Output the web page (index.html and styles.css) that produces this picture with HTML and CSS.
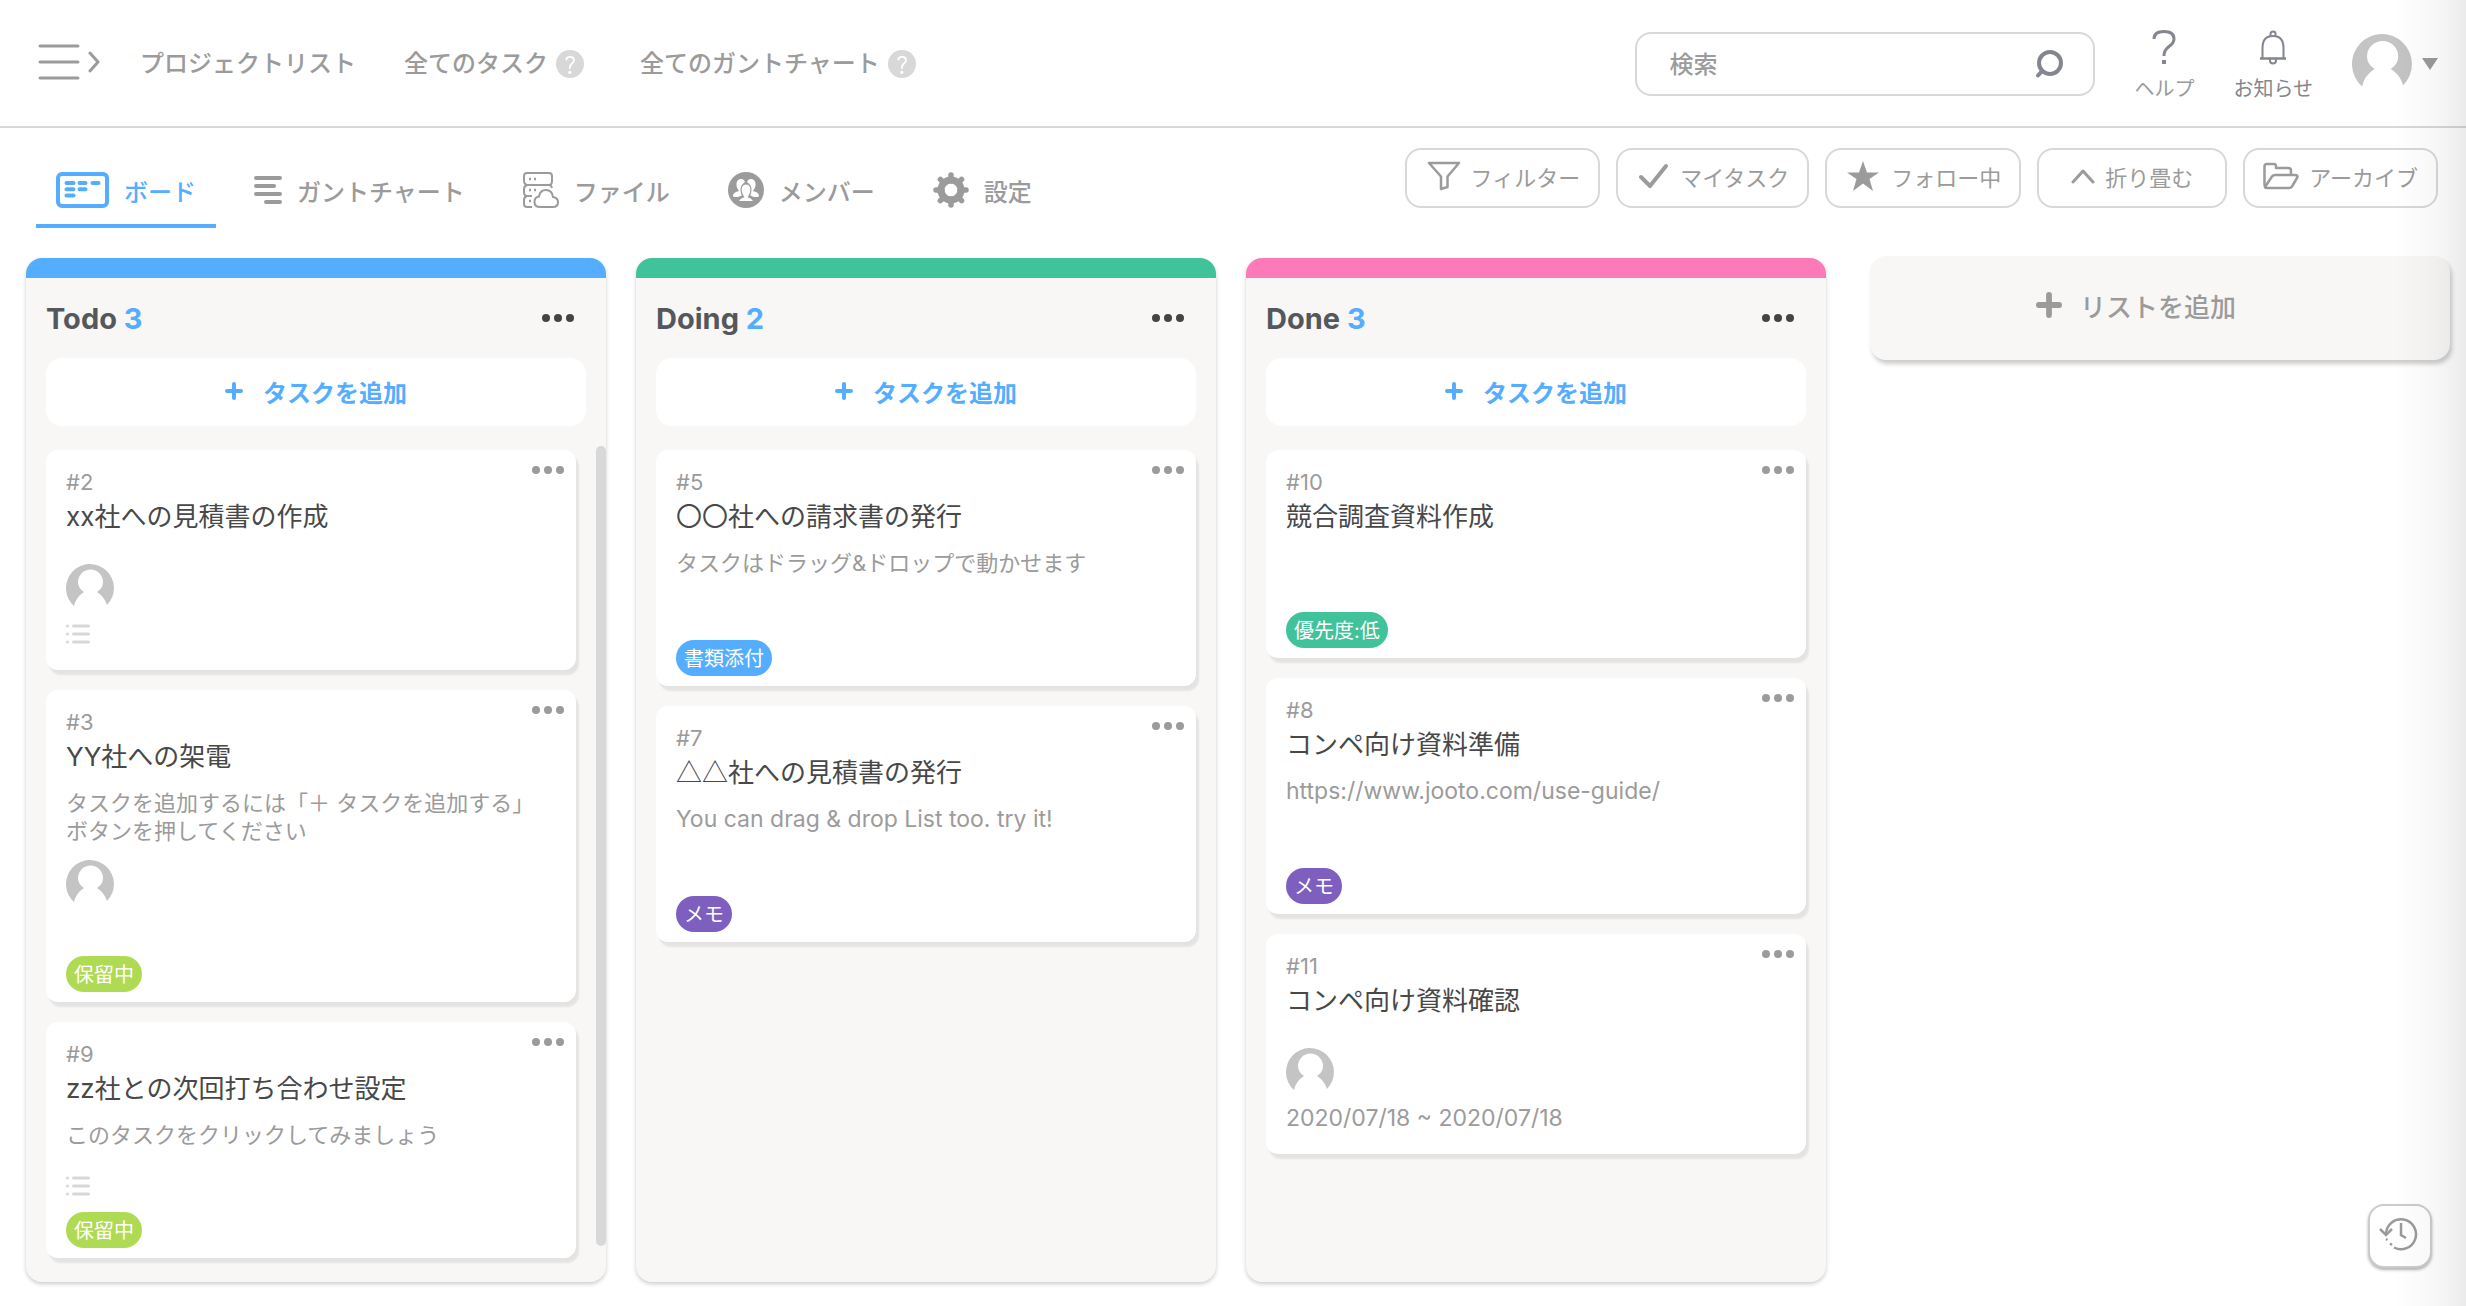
FILE: index.html
```html
<!DOCTYPE html>
<html lang="ja">
<head>
<meta charset="utf-8">
<meta name="viewport" content="width=device-width, initial-scale=1">
<title>ボード</title>
<link rel="stylesheet" href="styles.css">
</head>
<body>
<svg class="sprite" aria-hidden="true">
  <symbol id="dots" viewBox="0 0 32 8"><circle cx="4" cy="4" r="4"/><circle cx="16" cy="4" r="4"/><circle cx="28" cy="4" r="4"/></symbol>
  <symbol id="avatar" viewBox="0 0 48 48"><path d="M8 42A24 24 0 1 1 41 41Q38 32 31 28Q37 24 37 18A12.500 12.500 0 1 0 12 18Q12 24 18 28Q10 33 8 42Z" fill="#c4c4c4"/></symbol>
  <symbol id="checklist" viewBox="0 0 24 20"><path d="M7.500 2h15M7.500 10h15M7.500 18h15M1.500 2h.01M1.500 10h.01M1.500 18h.01" fill="none" stroke="#d8d8d8" stroke-width="3" stroke-linecap="round"/></symbol>
  <symbol id="plus" viewBox="0 0 18 18"><path d="M9 2v14M2 9h14" fill="none" stroke="currentColor" stroke-width="4" stroke-linecap="round"/></symbol>
  <symbol id="question" viewBox="0 0 28 28"><circle cx="14" cy="14" r="14" fill="#d8d8d8"/><path d="M10.300 9.500Q10.800 6.800 14 6.800Q18 6.800 18 10.200Q18 12 16 13.500Q13.800 15.200 13.800 18" fill="none" stroke="#fff" stroke-width="1.800" stroke-linecap="round"/><circle cx="13.800" cy="22.300" r="1.600" fill="#fff"/></symbol>
</svg>

<header class="header">
  <button class="menu" aria-label="メニュー"><svg width="62" height="36" viewBox="0 0 62 36" fill="none" stroke="currentColor" stroke-width="3" stroke-linecap="round" stroke-linejoin="round"><path d="M2 2h38M2 18h38M2 34h38M52 9l8 9-8 9"/></svg></button>
  <nav class="nav">
    <a class="nav-link" href="#">プロジェクトリスト</a>
    <a class="nav-link" href="#">全てのタスク<svg class="hint" width="28" height="28"><use href="#question"/></svg></a>
    <a class="nav-link" href="#">全てのガントチャート<svg class="hint" width="28" height="28"><use href="#question"/></svg></a>
  </nav>
  <form class="search" role="search">
    <input class="search-input" type="text" placeholder="検索" aria-label="検索">
    <button class="search-button" type="button" aria-label="検索する"><svg width="28" height="28" viewBox="0 0 28 28" fill="none" stroke="currentColor" stroke-width="4" stroke-linecap="round"><circle cx="15" cy="13" r="11"/><path d="M7 21l-4 4.500"/></svg></button>
  </form>
  <a class="header-item" href="#"><svg width="36" height="36" viewBox="0 0 36 36" fill="none" stroke="#84868f" stroke-width="3"><path d="M8 10Q8 2.500 18 2.500Q28 2.500 28 10Q28 14 23 17.500Q18 21 18 27"/><path d="M18 31v4" stroke-width="4"/></svg>ヘルプ</a>
  <a class="header-item header-item--dark" href="#"><svg width="36" height="36" viewBox="0 0 36 36" fill="none" stroke="currentColor" stroke-width="2"><path d="M7.500 29V19Q7.500 7 18 7Q28.500 7 28.500 19V29"/><path d="M5 29.500h26" stroke-width="2.500"/><path d="M15.500 7.500V5a2.500 2.500 0 0 1 5 0V7.500M15 30v1.500q0 3 3 3t3-3V30"/></svg>お知らせ</a>
  <button class="account" aria-label="アカウント"><svg width="60" height="60"><use href="#avatar"/></svg><svg width="16" height="12" viewBox="0 0 16 12"><path d="M0 0h16L8 12z" fill="#9b9b9b"/></svg></button>
</header>

<div class="toolbar">
  <nav class="tabs">
    <a class="tab tab--active" href="#"><svg width="53" height="36" viewBox="0 0 53 36" fill="none" stroke="currentColor" stroke-width="4" stroke-linecap="round"><rect x="2" y="2" width="49" height="32" rx="4"/><path d="M10.500 11h7M23.500 11h6M36.500 11h6M10.500 17.300h7M23.500 17.300h6M10.500 23.500h7"/></svg>ボード</a>
    <a class="tab" href="#"><svg width="28" height="28" viewBox="0 0 28 28" fill="none" stroke="currentColor" stroke-width="4" stroke-linecap="round"><path d="M2 2h24M2 10h18M2 18h24M12 26h14"/></svg>ガントチャート</a>
    <a class="tab" href="#"><svg width="36" height="36" viewBox="0 0 36 36" fill="none" stroke="currentColor" stroke-width="2"><path d="M4 13Q1 12 1 9V4Q1 1 4 1H26Q29 1 29 4V9Q29 13 26 13H4Q1 14 1 17V20Q1 24 4 24H9M26 13Q28 13 29 16M4 24Q1 25 1 28V32Q1 35 4 35H9"/><path d="M17 35Q11.500 35 11.500 30Q11.500 25 16 24.500Q17 18 23 18Q29 18 30 25Q35 26 35 30Q35 35 30 35Z"/><path d="M6 7h2M11 7h2M6 18h2M11 18h2M6 29h2" stroke-width="2.500"/></svg>ファイル</a>
    <a class="tab" href="#"><svg width="36" height="36" viewBox="0 0 36 36"><circle cx="18" cy="18" r="18" fill="currentColor"/><g fill="#fff"><path d="M5 23Q6 20 11 19Q8 15 8.500 11.500Q9 7 13 7Q16 7 17 10Q12 13 14 18L16 22Q13 24 10 25H6Q5 25 5 23Z"/><path d="M31 23Q30 20 25 19Q28 15 27.500 11.500Q27 7 23 7Q20 7 19 10Q24 13 22 18L20 22Q23 24 26 25H30Q31 25 31 23Z"/><path d="M10.500 29.500Q11 26.500 15.500 25Q13 21.500 13 17.500Q13.500 12 18 12Q22.500 12 23 17.500Q23 21.500 20.500 25Q25 26.500 25.500 29.500Z" stroke="#9b9b9b" stroke-width="1.200"/></g></svg>メンバー</a>
    <a class="tab" href="#"><svg width="36" height="36" viewBox="0 0 36 36" fill="none" stroke="currentColor"><circle cx="18" cy="18" r="10" stroke-width="7"/><path d="M18 3v6M18 27v6M3 18h6M27 18h6M7.400 7.400l4 4M24.600 24.600l4 4M28.600 7.400l-4 4M11.400 24.600l-4 4" stroke-width="5.500" stroke-linecap="round"/></svg>設定</a>
  </nav>
  <div class="actions">
    <button class="action"><svg width="36" height="30" viewBox="0 0 36 30" fill="none" stroke="currentColor" stroke-width="2.500" stroke-linejoin="round"><path d="M4 2H34L22.500 15.500V26L16 28V15.500Z"/></svg>フィルター</button>
    <button class="action"><svg width="34" height="26" viewBox="0 0 34 26" fill="none" stroke="currentColor" stroke-width="4" stroke-linecap="round" stroke-linejoin="round"><path d="M5 14l9 9L30 3"/></svg>マイタスク</button>
    <button class="action"><svg width="36" height="30" viewBox="0 0 36 30"><path d="M18 0l4 11.500h12L24.500 18 28 30l-10-7.500L8 30l3.500-12L2 11.500h12z" fill="currentColor"/></svg>フォロー中</button>
    <button class="action action--wide"><svg width="24" height="16" viewBox="0 0 24 16" fill="none" stroke="currentColor" stroke-width="3" stroke-linecap="round" stroke-linejoin="round"><path d="M2 14L12 3l10 11"/></svg>折り畳む</button>
    <button class="action"><svg width="36" height="28" viewBox="0 0 36 28" fill="none" stroke="currentColor" stroke-width="2.500" stroke-linejoin="round"><path d="M3 25Q1.500 25 1.500 22V4.500Q1.500 2 4 2H11Q13 2 13 4.500V6H25Q28 6 28 8.500V13"/><path d="M2 25L9 14.500Q10 13 12 13H32Q35.500 13 34 16L29 24.500Q28 26 26 26H4Q2 26 2 25Z"/></svg>アーカイブ</button>
  </div>
</div>

<main class="board">
  <section class="column column--blue column--scroll">
    <div class="column-head"><h2 class="column-title">Todo <span class="count">3</span></h2><button class="dots" aria-label="リストメニュー"><svg width="32" height="8"><use href="#dots"/></svg></button></div>
    <button class="add-task"><svg width="18" height="18"><use href="#plus"/></svg>タスクを追加</button>
    <div class="cards">
      <article class="card">
        <button class="dots card-menu" aria-label="タスクメニュー"><svg width="32" height="8"><use href="#dots"/></svg></button>
        <span class="card-id">#2</span>
        <h3 class="card-title">xx社への見積書の作成</h3>
        <p class="card-text"></p>
        <svg class="avatar" width="48" height="48"><use href="#avatar"/></svg>
        <div class="meta"><svg width="24" height="20"><use href="#checklist"/></svg></div>
        <div class="tags"></div>
      </article>
      <article class="card">
        <button class="dots card-menu" aria-label="タスクメニュー"><svg width="32" height="8"><use href="#dots"/></svg></button>
        <span class="card-id">#3</span>
        <h3 class="card-title">YY社への架電</h3>
        <p class="card-text">タスクを追加するには「＋ タスクを追加する」<br>ボタンを押してください</p>
        <svg class="avatar" width="48" height="48"><use href="#avatar"/></svg>
        <div class="meta"></div>
        <div class="tags"><span class="tag tag--lime">保留中</span></div>
      </article>
      <article class="card">
        <button class="dots card-menu" aria-label="タスクメニュー"><svg width="32" height="8"><use href="#dots"/></svg></button>
        <span class="card-id">#9</span>
        <h3 class="card-title">zz社との次回打ち合わせ設定</h3>
        <p class="card-text">このタスクをクリックしてみましょう</p>
        <div class="meta"><svg width="24" height="20"><use href="#checklist"/></svg></div>
        <div class="tags"><span class="tag tag--lime">保留中</span></div>
      </article>
    </div>
    <div class="scrollbar"></div>
  </section>

  <section class="column column--green">
    <div class="column-head"><h2 class="column-title">Doing <span class="count">2</span></h2><button class="dots" aria-label="リストメニュー"><svg width="32" height="8"><use href="#dots"/></svg></button></div>
    <button class="add-task"><svg width="18" height="18"><use href="#plus"/></svg>タスクを追加</button>
    <div class="cards">
      <article class="card">
        <button class="dots card-menu" aria-label="タスクメニュー"><svg width="32" height="8"><use href="#dots"/></svg></button>
        <span class="card-id">#5</span>
        <h3 class="card-title"><span class="symbols">〇〇</span>社への請求書の発行</h3>
        <p class="card-text">タスクはドラッグ&amp;ドロップで動かせます</p>
        <div class="meta"></div>
        <div class="tags"><span class="tag tag--blue">書類添付</span></div>
      </article>
      <article class="card">
        <button class="dots card-menu" aria-label="タスクメニュー"><svg width="32" height="8"><use href="#dots"/></svg></button>
        <span class="card-id">#7</span>
        <h3 class="card-title"><span class="symbols">△△</span>社への見積書の発行</h3>
        <p class="card-text card-text--latin">You can drag &amp; drop List too. try it!</p>
        <div class="meta"></div>
        <div class="tags"><span class="tag tag--purple">メモ</span></div>
      </article>
    </div>
  </section>

  <section class="column column--pink">
    <div class="column-head"><h2 class="column-title">Done <span class="count">3</span></h2><button class="dots" aria-label="リストメニュー"><svg width="32" height="8"><use href="#dots"/></svg></button></div>
    <button class="add-task"><svg width="18" height="18"><use href="#plus"/></svg>タスクを追加</button>
    <div class="cards">
      <article class="card">
        <button class="dots card-menu" aria-label="タスクメニュー"><svg width="32" height="8"><use href="#dots"/></svg></button>
        <span class="card-id">#10</span>
        <h3 class="card-title">競合調査資料作成</h3>
        <p class="card-text"></p>
        <div class="meta"></div>
        <div class="tags"><span class="tag tag--green">優先度:低</span></div>
      </article>
      <article class="card">
        <button class="dots card-menu" aria-label="タスクメニュー"><svg width="32" height="8"><use href="#dots"/></svg></button>
        <span class="card-id">#8</span>
        <h3 class="card-title">コンペ向け資料準備</h3>
        <p class="card-text card-text--latin">https://www.jooto.com/use-guide/</p>
        <div class="meta"></div>
        <div class="tags"><span class="tag tag--purple">メモ</span></div>
      </article>
      <article class="card">
        <button class="dots card-menu" aria-label="タスクメニュー"><svg width="32" height="8"><use href="#dots"/></svg></button>
        <span class="card-id">#11</span>
        <h3 class="card-title">コンペ向け資料確認</h3>
        <p class="card-text"></p>
        <svg class="avatar" width="48" height="48"><use href="#avatar"/></svg>
        <div class="meta">2020/07/18 ~ 2020/07/18</div>
        <div class="tags"></div>
      </article>
    </div>
  </section>

  <button class="add-list"><svg width="26" height="26"><use href="#plus"/></svg>リストを追加</button>
</main>

<button class="history" aria-label="履歴"><svg width="40" height="34" viewBox="0 0 40 34" fill="none" stroke="currentColor" stroke-width="2.500"><path d="M8 17A15 15 0 1 1 16 30.500"/><path d="M2 12l6 6 6-6"/><path d="M23 6V18l5 3"/><path d="M8 22l1.500 1M12 26.500l2 1.500"/></svg></button>
<div class="edge-shade"></div>
</body>
</html>
```
FILE: styles.css
```css
* { box-sizing: border-box; }

body {
  margin: 0;
  min-height: 100vh;
  display: flex;
  flex-direction: column;
  background: #fff;
  color: #9b9b9b;
  font-family: Inter, "Noto Sans CJK JP", sans-serif;
  font-size: 24px;
}

h2, h3, p { margin: 0; }
a { color: inherit; text-decoration: none; }
svg { flex: none; display: block; }
.sprite { position: absolute; width: 0; height: 0; }

button {
  margin: 0;
  padding: 0;
  border: 0;
  background: none;
  color: inherit;
  font: inherit;
  cursor: pointer;
}

/* Header */
.header {
  display: flex;
  align-items: center;
  height: 128px;
  padding: 2px 28px 0 38px;
  border-bottom: 2px solid #d8d8d8;
}
.menu { margin-right: 40px; padding-bottom: 4px; }
.nav {
  display: flex;
  gap: 48px;
  margin-right: auto;
  font-weight: 500;
}
.nav-link {
  display: flex;
  align-items: center;
  gap: 8px;
  line-height: 28px;
  white-space: nowrap;
}
.hint { margin-right: 8px; }

.search {
  display: flex;
  align-items: center;
  flex: 0 1 460px;
  min-width: 0;
  height: 64px;
  margin-right: 39px;
  padding: 0 30px 0 32px;
  border: 2px solid #d8d8d8;
  border-radius: 16px;
}
.search-input {
  flex: 1;
  min-width: 0;
  padding: 0;
  border: 0;
  outline: 0;
  background: none;
  color: #484848;
  font: 500 24px Inter, "Noto Sans CJK JP", sans-serif;
}
.search-input::placeholder { color: #9b9b9b; opacity: 1; }
.search-button { color: #84868f; }

.header-item {
  display: flex;
  flex-direction: column;
  align-items: center;
  gap: 10px;
  margin-right: 39px;
  padding-top: 4px;
  font-size: 20px;
  line-height: 28px;
  white-space: nowrap;
}
.header-item--dark { color: #84868f; }
.account { display: flex; align-items: center; gap: 10px; }

/* Tabs and board actions */
.toolbar {
  display: flex;
  justify-content: space-between;
  padding: 0 28px 0 36px;
}
.tabs { display: flex; gap: 18px; font-weight: 500; }
.tab {
  display: flex;
  align-items: center;
  gap: 15px;
  height: 100px;
  padding: 28px 20px 0;
  border-bottom: 4px solid transparent;
  white-space: nowrap;
}
.tab--active { border-color: #54adff; color: #54adff; }

.actions { display: flex; gap: 16px; padding-top: 20px; font-size: 22px; }
.action {
  display: flex;
  align-items: center;
  gap: 10px;
  height: 60px;
  padding: 0 18px 4px;
  border: 2px solid #d8d8d8;
  border-radius: 16px;
  white-space: nowrap;
}
.action--wide { padding: 0 32px 4px; }

/* Board */
.board {
  flex: 1;
  display: flex;
  align-items: stretch;
  gap: 30px;
  padding: 30px 16px 24px 26px;
}
.column {
  position: relative;
  flex: 1 1 400px;
  min-width: 400px;
  padding: 0 20px 24px;
  border-top: 20px solid;
  border-radius: 16px;
  background: #f8f7f6;
  box-shadow: 0 2px 4px rgba(0, 0, 0, .2);
}
.column--blue { border-top-color: #54adff; }
.column--green { border-top-color: #40c39a; }
.column--pink { border-top-color: #fc7ab8; }

.column-head {
  display: flex;
  align-items: center;
  justify-content: space-between;
  height: 80px;
  padding-right: 12px;
}
.column-title { color: #54575c; font-size: 29px; font-weight: 700; }
.count { color: #54adff; }
.dots { color: #444; fill: currentColor; }

.add-task {
  display: flex;
  align-items: center;
  justify-content: center;
  gap: 20px;
  width: 100%;
  height: 68px;
  padding-bottom: 2px;
  border-radius: 16px;
  background: #fff;
  color: #54adff;
  font-weight: 700;
}

.cards {
  display: flex;
  flex-direction: column;
  gap: 20px;
  margin-top: 24px;
}
.column--scroll .cards { margin-right: 10px; }
.scrollbar {
  position: absolute;
  top: 168px;
  right: 0;
  bottom: 36px;
  width: 10px;
  border-radius: 5px;
  background: #d8d8d8;
}

.card {
  position: relative;
  padding: 20px 20px 10px;
  border-radius: 12px;
  background: #fff;
  box-shadow: 3px 5px 2px rgba(0, 0, 0, .08);
  font-size: 22px;
}
.card-menu { position: absolute; top: 16px; right: 12px; color: #9b9b9b; }
.card-id { display: block; line-height: 24px; }
.card-title {
  margin-top: 7px;
  color: #484848;
  font-size: 26px;
  font-weight: 400;
  line-height: 32px;
}
.symbols { font-family: "Noto Sans CJK JP", sans-serif; line-height: 0; }
.card-text { margin: 16px 0 15px; line-height: 28px; }
.card-text:empty { margin: 0; height: 31px; }
.card-text--latin { font-size: 23px; }
.meta { display: flex; align-items: center; height: 44px; font-size: 23px; }
.tags { display: flex; margin-top: 4px; }
.tag {
  height: 36px;
  padding: 0 8px;
  border-radius: 18px;
  color: #fff;
  font-size: 20px;
  line-height: 38px;
}
.tag--lime { background: #afda53; }
.tag--blue { background: #54adff; }
.tag--purple { background: #7e5fbf; }
.tag--green { background: #40c39a; }

.add-list {
  display: flex;
  align-items: center;
  justify-content: center;
  gap: 18px;
  flex: 1 1 400px;
  min-width: 400px;
  height: 104px;
  margin: -2px 0 0 14px;
  padding: 0 48px 6px 0;
  border-radius: 16px;
  background: #f8f7f6;
  box-shadow: 2px 4px 4px rgba(0, 0, 0, .2);
  font-size: 26px;
  font-weight: 500;
}

/* Floating over the board */
.history {
  position: fixed;
  right: 34px;
  bottom: 38px;
  display: flex;
  align-items: center;
  justify-content: center;
  width: 64px;
  height: 64px;
  padding: 0 4px 4px 0;
  border: 2px solid #ccc;
  border-radius: 16px;
  background: #fff;
  box-shadow: 0 2px 3px rgba(0, 0, 0, .3);
}
.edge-shade {
  position: fixed;
  top: 0;
  right: 0;
  bottom: 0;
  width: 72px;
  background: linear-gradient(to right, transparent, rgba(0, 0, 0, .03) 60%, rgba(0, 0, 0, .08));
  pointer-events: none;
}
```
